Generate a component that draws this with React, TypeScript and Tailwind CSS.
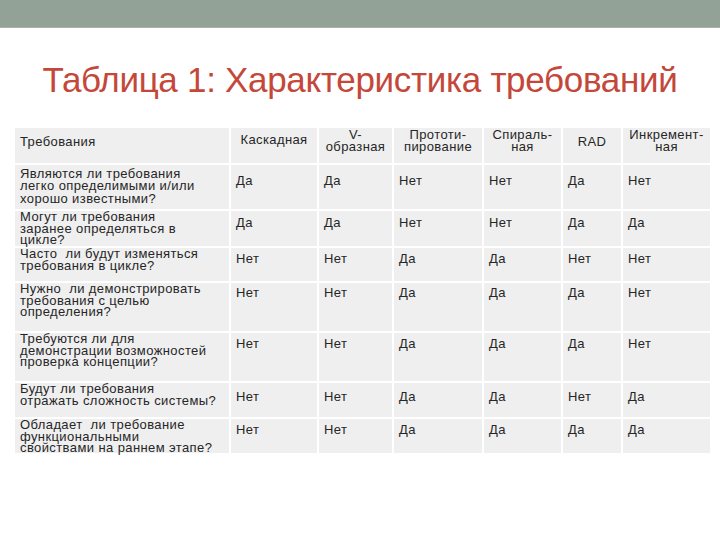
import React from "react";

const cols = "grid-cols-[214px_86px_73px_88px_77px_58px_87px]";

type Row = { q: string[]; v: string[]; h: string; pt: string };

const rows: Row[] = [
  { q: ["Являются ли требования", "легко определимыми и/или", "хорошо известными?"], v: ["Да", "Да", "Нет", "Нет", "Да", "Нет"], h: "h-[44px]", pt: "pt-[9px]" },
  { q: ["Могут ли требования", "заранее определяться в", "цикле?"], v: ["Да", "Да", "Нет", "Нет", "Да", "Да"], h: "h-[35px]", pt: "pt-[5px]" },
  { q: ["Часто  ли будут изменяться", "требования в цикле?"], v: ["Нет", "Нет", "Да", "Да", "Нет", "Нет"], h: "h-[33px]", pt: "pt-[4px]" },
  { q: ["Нужно  ли демонстрировать", "требования с целью", "определения?"], v: ["Нет", "Нет", "Да", "Да", "Да", "Нет"], h: "h-[48px]", pt: "pt-[3px]" },
  { q: ["Требуются ли для", "демонстрации возможностей", "проверка концепции?"], v: ["Нет", "Нет", "Да", "Да", "Да", "Нет"], h: "h-[48px]", pt: "pt-[4px]" },
  { q: ["Будут ли требования", "отражать сложность системы?"], v: ["Нет", "Нет", "Да", "Да", "Нет", "Да"], h: "h-[34px]", pt: "pt-[7px]" },
  { q: ["Обладает  ли требование", "функциональными", "свойствами на раннем этапе?"], v: ["Нет", "Нет", "Да", "Да", "Да", "Да"], h: "h-[34px]", pt: "pt-[4px]" },
];

const headers: string[][] = [
  ["Каскадная"],
  ["V-", "образная"],
  ["Прототи-", "пирование"],
  ["Спираль-", "ная"],
  ["RAD"],
  ["Инкремент-", "ная"],
];

export default function App() {
  return (
    <div
      className="w-[720px] h-[540px] bg-white overflow-hidden"
      style={{ fontFamily: '"Liberation Sans", Arial, sans-serif' }}
    >
      <div className="h-[28px] bg-[#92a296] border-b border-[#a9b3ab]" />
      <div className="h-[100px] flex items-start justify-center pt-[31px]">
        <h1 className="text-[35px] leading-[42px] text-[#c4483a] tracking-[-0.3px]">
          Таблица 1: Характеристика требований
        </h1>
      </div>
      <div className={`ml-[15px] w-[695px] grid ${cols} gap-[2px] bg-white text-[13px] tracking-[0.4px] text-[#262626]`}>
        <div className="h-[35px] bg-[#efefef] pl-[5px] pt-[7px] leading-[13px]">Требования</div>
        {headers.map((h, i) => (
          <div key={i} className="h-[35px] bg-[#efefef] flex flex-col items-center">
            {h.length === 1 ? (
              <span className={`leading-[13px] ${h[0] === "RAD" ? "pt-[7px]" : "pt-[5px]"}`}>{h[0]}</span>
            ) : (
              <div className="pt-[1px] flex flex-col items-center leading-[12px]">
                {h.map((l, j) => (
                  <span key={j}>{l}</span>
                ))}
              </div>
            )}
          </div>
        ))}
        {rows.map((r, i) => (
          <React.Fragment key={i}>
            <div className={`${r.h} bg-[#efefef] pl-[5px] ${i === 0 ? "pt-[3px]" : "pt-0"} leading-[11.5px]`}>
              {r.q.map((l, j) => (
                <div key={j} className={i === 0 && j === 2 ? "mt-[2px] whitespace-pre" : "whitespace-pre"}>{l}</div>
              ))}
            </div>
            {r.v.map((v, j) => (
              <div key={j} className={`${r.h} bg-[#efefef] pl-[5px] ${r.pt} leading-[14px]`}>{v}</div>
            ))}
          </React.Fragment>
        ))}
      </div>
    </div>
  );
}
